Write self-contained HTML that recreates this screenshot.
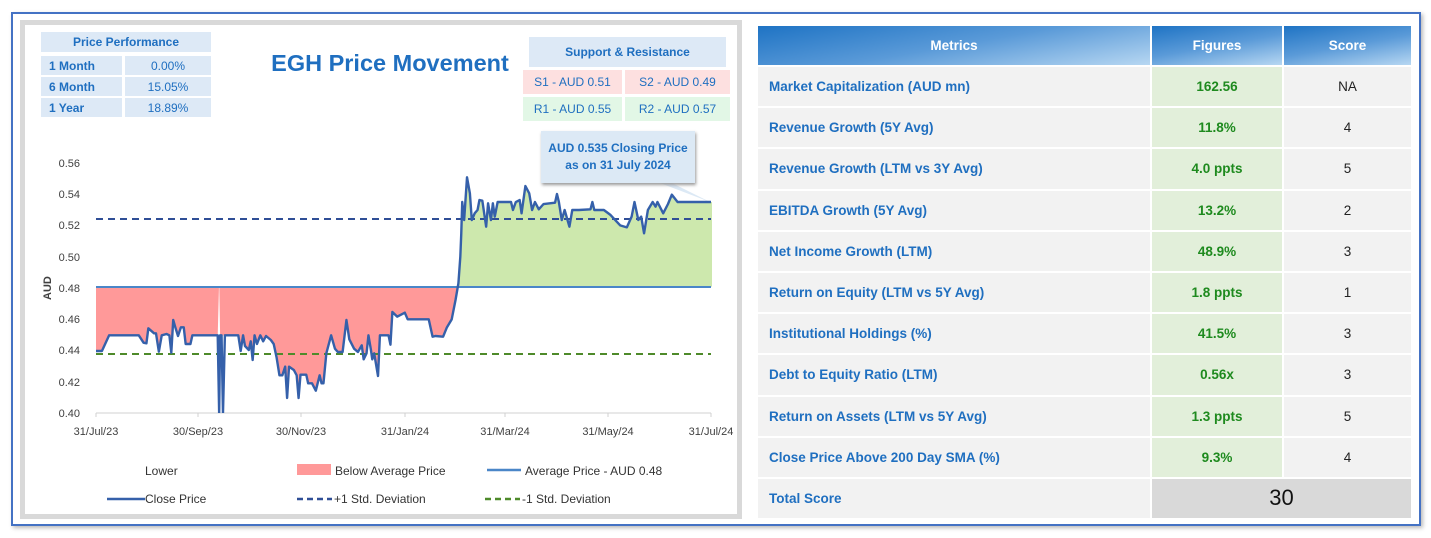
<!DOCTYPE html>
<html><head><meta charset="utf-8"><style>
*{margin:0;padding:0;box-sizing:border-box}
body{width:1431px;height:538px;background:#fff;position:relative;font-family:"Liberation Sans",sans-serif;overflow:hidden}
.outer{position:absolute;left:11px;top:12px;width:1410px;height:514px;border:2px solid #4472c4;box-shadow:2px 2px 4px #bbb}
.lp{position:absolute;left:20px;top:20px;width:722px;height:499px;border:5px solid #d9d9d9;background:#fff}
.a{position:absolute;font-size:12px;color:#1f6fc0;display:flex;align-items:center}
.b{font-weight:bold}
.c{justify-content:center}
table{position:absolute;left:756px;top:24px;border-collapse:collapse}
td{height:41.2px;border:2px solid #fff;font-size:13.5px;font-weight:bold;color:#1f6fc0;background:#f2f2f2}
td.m{width:394px;padding-left:11px}
td.f{width:132px;text-align:center;color:#1e8a1e;background:#e2efda}
td.s{width:129px;text-align:center;color:#222;font-weight:normal}
th{height:41px;border:2px solid #fff;color:#fff;font-size:13.5px;background:linear-gradient(170deg,#1e73c4 0%,#5a9ad8 50%,#b7d7f2 100%)}
.lg{position:absolute;font-size:12px;color:#333}
</style></head><body>
<div class="outer"></div>
<div class="lp"></div>
<div class="a b c" style="left:41px;top:32px;width:170px;height:20px;background:#dde9f6">Price Performance</div>
<div class="a b" style="left:41px;top:56px;width:81px;height:19px;background:#dde9f6;padding-left:8px">1 Month</div>
<div class="a c" style="left:125px;top:56px;width:86px;height:19px;background:#dde9f6">0.00%</div>
<div class="a b" style="left:41px;top:77px;width:81px;height:19px;background:#dde9f6;padding-left:8px">6 Month</div>
<div class="a c" style="left:125px;top:77px;width:86px;height:19px;background:#dde9f6">15.05%</div>
<div class="a b" style="left:41px;top:98px;width:81px;height:19px;background:#dde9f6;padding-left:8px">1 Year</div>
<div class="a c" style="left:125px;top:98px;width:86px;height:19px;background:#dde9f6">18.89%</div>
<div class="a b" style="left:262px;top:48px;width:256px;height:30px;font-size:23.5px;justify-content:center">EGH Price Movement</div>
<div class="a b c" style="left:529px;top:37px;width:197px;height:30px;background:#dde9f6">Support &amp; Resistance</div>
<div class="a c" style="left:523px;top:70px;width:99px;height:24px;background:#fde0e0">S1 - AUD 0.51</div>
<div class="a c" style="left:625px;top:70px;width:105px;height:24px;background:#fde0e0">S2 - AUD 0.49</div>
<div class="a c" style="left:523px;top:97px;width:99px;height:24px;background:#e2f7e6">R1 - AUD 0.55</div>
<div class="a c" style="left:625px;top:97px;width:105px;height:24px;background:#e2f7e6">R2 - AUD 0.57</div>
<svg style="position:absolute;left:0;top:0" width="745" height="538">
<defs>
<clipPath id="cr"><rect x="96" y="287" width="620" height="130"/></clipPath>
<clipPath id="cg"><rect x="96" y="150" width="620" height="137"/></clipPath>
<clipPath id="cl"><rect x="96" y="140" width="615" height="273"/></clipPath>
</defs>
<polygon points="660,183 672,183 710,202" fill="#dce9f5"/>
<g font-size="11" fill="#404040" font-family="Liberation Sans,sans-serif" text-anchor="end">
<text x="80" y="167">0.56</text><text x="80" y="198">0.54</text><text x="80" y="229">0.52</text><text x="80" y="261">0.50</text><text x="80" y="292">0.48</text><text x="80" y="323">0.46</text><text x="80" y="354">0.44</text><text x="80" y="386">0.42</text><text x="80" y="417">0.40</text>
</g>
<text transform="translate(51,300) rotate(-90)" font-size="11" font-weight="bold" fill="#404040" font-family="Liberation Sans,sans-serif">AUD</text>
<g font-size="11" fill="#404040" font-family="Liberation Sans,sans-serif" text-anchor="middle">
<text x="96" y="435">31/Jul/23</text><text x="198" y="435">30/Sep/23</text><text x="301" y="435">30/Nov/23</text><text x="405" y="435">31/Jan/24</text><text x="505" y="435">31/Mar/24</text><text x="608" y="435">31/May/24</text><text x="711" y="435">31/Jul/24</text>
</g>
<line x1="96" y1="413" x2="711" y2="413" stroke="#d0d0d0"/>
<g stroke="#d0d0d0"><line x1="96" y1="413" x2="96" y2="417"/><line x1="198" y1="413" x2="198" y2="417"/><line x1="301" y1="413" x2="301" y2="417"/><line x1="405" y1="413" x2="405" y2="417"/><line x1="505" y1="413" x2="505" y2="417"/><line x1="608" y1="413" x2="608" y2="417"/><line x1="711" y1="413" x2="711" y2="417"/></g>
<g clip-path="url(#cr)"><g transform="translate(0,270) scale(0.4785,0.3333)"><path fill="#ff9999" stroke="none" d="M200,243 L213,243 228,196 290,196 300,218 306,220 310,175 322,190 326,190 332,245 338,196 348,192 354,196 358,248 362,150 366,170 372,198 378,172 384,172 388,222 398,222 402,196 455,196 458,30 460,196 463,196 466,196 470,196 498,196 503,243 508,196 512,228 520,240 524,214 528,270 532,196 537,222 544,196 550,214 556,198 566,210 572,222 578,262 584,316 590,316 596,290 600,384 604,290 614,300 620,316 624,384 628,314 640,314 644,340 652,340 660,362 668,316 672,340 676,340 682,250 692,196 700,236 706,246 716,246 724,150 730,208 740,236 748,246 756,226 760,268 766,250 770,196 775,238 778,268 782,250 790,318 794,196 812,196 816,224 820,126 830,140 846,128 852,148 860,148 896,148 904,200 910,198 926,200 934,172 944,148 952,90 958,40 962,-40 964,-110 966,-204 1488,-204 L1488,50 L200,50 Z"/></g></g>
<g clip-path="url(#cg)"><g transform="translate(0,270) scale(0.4785,0.3333)"><path fill="#cde8ad" stroke="none" d="M958,40 962,-40 964,-110 966,-204 970,-150 976,-278 982,-230 986,-150 992,-170 998,-180 1002,-210 1008,-208 1016,-130 1020,-200 1026,-150 1030,-200 1034,-160 1040,-204 1068,-204 1072,-180 1078,-204 1086,-210 1090,-170 1098,-252 1106,-230 1112,-180 1118,-204 1126,-182 1136,-198 1160,-202 1164,-228 1168,-204 1174,-150 1180,-180 1190,-130 1196,-180 1210,-180 1234,-182 1238,-204 1242,-180 1262,-180 1276,-165 1296,-134 1310,-128 1320,-160 1326,-204 1334,-150 1340,-160 1346,-110 1354,-180 1364,-204 1370,-190 1374,-204 1386,-170 1396,-198 1404,-226 1416,-204 1488,-204 L1488,50 L958,50 Z"/></g></g>
<line x1="96" y1="287" x2="711" y2="287" stroke="#4a86c8" stroke-width="2"/>
<line x1="96" y1="219" x2="711" y2="219" stroke="#2f4e96" stroke-width="2" stroke-dasharray="7,5"/>
<line x1="96" y1="354" x2="711" y2="354" stroke="#4e8a2a" stroke-width="2" stroke-dasharray="7,5"/>
<g clip-path="url(#cl)"><g transform="translate(0,270) scale(0.4785,0.3333)"><path d="M200,243 L213,243 228,196 290,196 300,218 306,220 310,175 322,190 326,190 332,245 338,196 348,192 354,196 358,248 362,150 366,170 372,198 378,172 384,172 388,222 398,222 402,196 455,196 458,430 460,196 463,196 466,430 470,196 498,196 503,243 508,196 512,228 520,240 524,214 528,270 532,196 537,222 544,196 550,214 556,198 566,210 572,222 578,262 584,316 590,316 596,290 600,384 604,290 614,300 620,316 624,384 628,314 640,314 644,340 652,340 660,362 668,316 672,340 676,340 682,250 692,196 700,236 706,246 716,246 724,150 730,208 740,236 748,246 756,226 760,268 766,250 770,196 775,238 778,268 782,250 790,318 794,196 812,196 816,224 820,126 830,140 846,128 852,148 860,148 896,148 904,200 910,198 926,200 934,172 944,148 952,90 958,40 962,-40 964,-110 966,-204 970,-150 976,-278 982,-230 986,-150 992,-170 998,-180 1002,-210 1008,-208 1016,-130 1020,-200 1026,-150 1030,-200 1034,-160 1040,-204 1068,-204 1072,-180 1078,-204 1086,-210 1090,-170 1098,-252 1106,-230 1112,-180 1118,-204 1126,-182 1136,-198 1160,-202 1164,-228 1168,-204 1174,-150 1180,-180 1190,-130 1196,-180 1210,-180 1234,-182 1238,-204 1242,-180 1262,-180 1276,-165 1296,-134 1310,-128 1320,-160 1326,-204 1334,-150 1340,-160 1346,-110 1354,-180 1364,-204 1370,-190 1374,-204 1386,-170 1396,-198 1404,-226 1416,-204 1488,-204" fill="none" stroke="#3560aa" stroke-width="2.4" vector-effect="non-scaling-stroke" stroke-linejoin="round"/></g></g>
<rect x="297" y="464" width="34" height="11" fill="#ff9999"/>
<line x1="487" y1="470" x2="521" y2="470" stroke="#4a86c8" stroke-width="2.5"/>
<line x1="107" y1="499" x2="145" y2="499" stroke="#3560aa" stroke-width="2.5"/>
<line x1="297" y1="499" x2="332" y2="499" stroke="#2f4e96" stroke-width="2.5" stroke-dasharray="6,4"/>
<line x1="485" y1="499" x2="520" y2="499" stroke="#4e8a2a" stroke-width="2.5" stroke-dasharray="6,4"/>
</svg>
<div class="a b c" style="left:541px;top:131px;width:154px;height:52px;background:#dce9f5;box-shadow:1px 2px 3px #999;text-align:center;line-height:17px">AUD 0.535 Closing Price<br>as on 31 July 2024</div>
<div class="lg" style="left:145px;top:464px">Lower</div>
<div class="lg" style="left:335px;top:464px">Below Average Price</div>
<div class="lg" style="left:525px;top:464px">Average Price - AUD 0.48</div>
<div class="lg" style="left:145px;top:492px">Close Price</div>
<div class="lg" style="left:334px;top:492px">+1 Std. Deviation</div>
<div class="lg" style="left:522px;top:492px">-1 Std. Deviation</div>
<table>
<tr><th>Metrics</th><th>Figures</th><th>Score</th></tr>
<tr><td class="m">Market Capitalization (AUD mn)</td><td class="f">162.56</td><td class="s">NA</td></tr>
<tr><td class="m">Revenue Growth (5Y Avg)</td><td class="f">11.8%</td><td class="s">4</td></tr>
<tr><td class="m">Revenue Growth (LTM vs 3Y Avg)</td><td class="f">4.0 ppts</td><td class="s">5</td></tr>
<tr><td class="m">EBITDA Growth (5Y Avg)</td><td class="f">13.2%</td><td class="s">2</td></tr>
<tr><td class="m">Net Income Growth (LTM)</td><td class="f">48.9%</td><td class="s">3</td></tr>
<tr><td class="m">Return on Equity (LTM vs 5Y Avg)</td><td class="f">1.8 ppts</td><td class="s">1</td></tr>
<tr><td class="m">Institutional Holdings (%)</td><td class="f">41.5%</td><td class="s">3</td></tr>
<tr><td class="m">Debt to Equity Ratio (LTM)</td><td class="f">0.56x</td><td class="s">3</td></tr>
<tr><td class="m">Return on Assets (LTM vs 5Y Avg)</td><td class="f">1.3 ppts</td><td class="s">5</td></tr>
<tr><td class="m">Close Price Above 200 Day SMA (%)</td><td class="f">9.3%</td><td class="s">4</td></tr>
<tr><td class="m">Total Score</td><td colspan="2" style="background:#d9d9d9;text-align:center;font-size:22px;font-weight:normal;color:#111">30</td></tr>
</table>
</body></html>
